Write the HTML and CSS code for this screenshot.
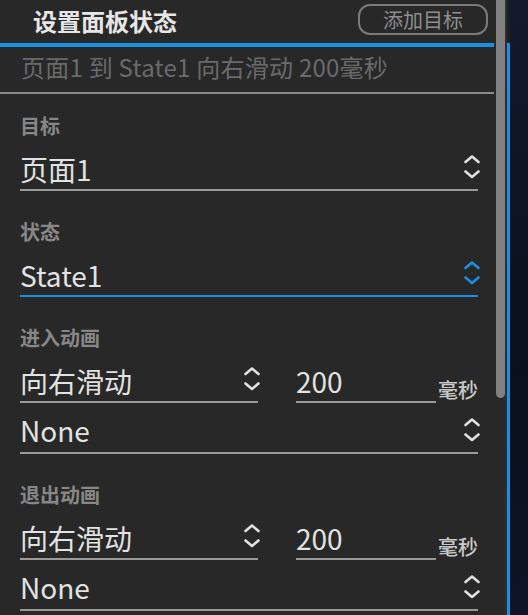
FILE: index.html
```html
<!DOCTYPE html>
<html lang="zh">
<head>
  <meta charset="UTF-8">
  <meta name="viewport" content="width=device-width, initial-scale=1.0">
  <title>设置面板状态</title>
  <link rel="stylesheet" href="styles.css">
</head>
<body>
  <div class="panel">
    <div class="header">
      <h1 class="title">设置面板状态</h1>
      <button class="add-button">添加目标</button>
    </div>
    <div class="summary">页面1 到 State1 向右滑动 200毫秒</div>

    <div class="form">
      <div class="group">
        <div class="label">目标</div>
        <div class="field">
          <span class="value">页面1</span>
          <svg class="chevrons" viewBox="0 0 16 24" width="16" height="24"><polyline points="1.5,7 8,1.5 14.5,7"/><polyline points="1.5,16.5 8,22 14.5,16.5"/></svg>
        </div>
      </div>

      <div class="group">
        <div class="label">状态</div>
        <div class="field active">
          <span class="value">State1</span>
          <svg class="chevrons" viewBox="0 0 16 24" width="16" height="24"><polyline points="1.5,7 8,1.5 14.5,7"/><polyline points="1.5,16.5 8,22 14.5,16.5"/></svg>
        </div>
      </div>

      <div class="group">
        <div class="label">进入动画</div>
        <div class="row">
          <div class="field effect">
            <span class="value">向右滑动</span>
            <svg class="chevrons" viewBox="0 0 16 24" width="16" height="24"><polyline points="1.5,7 8,1.5 14.5,7"/><polyline points="1.5,16.5 8,22 14.5,16.5"/></svg>
          </div>
          <div class="field duration">
            <span class="value">200</span>
          </div>
          <span class="unit">毫秒</span>
        </div>
        <div class="field">
          <span class="value latin">None</span>
          <svg class="chevrons" viewBox="0 0 16 24" width="16" height="24"><polyline points="1.5,7 8,1.5 14.5,7"/><polyline points="1.5,16.5 8,22 14.5,16.5"/></svg>
        </div>
      </div>

      <div class="group">
        <div class="label">退出动画</div>
        <div class="row">
          <div class="field effect">
            <span class="value">向右滑动</span>
            <svg class="chevrons" viewBox="0 0 16 24" width="16" height="24"><polyline points="1.5,7 8,1.5 14.5,7"/><polyline points="1.5,16.5 8,22 14.5,16.5"/></svg>
          </div>
          <div class="field duration">
            <span class="value">200</span>
          </div>
          <span class="unit">毫秒</span>
        </div>
        <div class="field">
          <span class="value latin">None</span>
          <svg class="chevrons" viewBox="0 0 16 24" width="16" height="24"><polyline points="1.5,7 8,1.5 14.5,7"/><polyline points="1.5,16.5 8,22 14.5,16.5"/></svg>
        </div>
      </div>
    </div>

    <div class="scrollbar"></div>
  </div>
  <div class="edge"></div>
  <div class="desk"></div>
</body>
</html>
```

FILE: styles.css
```css
html, body {
  height: 100%;
}
body {
  margin: 0;
  display: flex;
  overflow: hidden;
  font-family: "Noto Sans CJK SC", sans-serif;
  background-color: #0c1322;
}
.panel {
  position: relative;
  width: 507px;
  flex: 0 0 507px;
  height: 100%;
  background-color: #282828;
  box-shadow: inset -2px 0 0 #2e2e2e;
  overflow: hidden;
}
.edge {
  flex: 0 0 3px;
  background: linear-gradient(#1e1e1e 43px, #1b8fe2 43px);
}
.desk {
  flex: 1;
  background: linear-gradient(160deg, #121a2c, #0a0f1c 60%, #0d1526);
}
.header {
  display: flex;
  align-items: flex-start;
  justify-content: space-between;
  width: 494px;
  height: 43px;
  border-bottom: 4px solid #1b8fe2;
}
.title {
  margin: 7px 0 0 33px;
  font-size: 24px;
  line-height: 28px;
  font-weight: 700;
  color: #e6e6e6;
}
.add-button {
  margin: 4px 6px 0 0;
  width: 130px;
  height: 31px;
  padding: 0;
  border: 2px solid #7a7a7a;
  border-radius: 12px;
  background: transparent;
  font-family: inherit;
  font-size: 20px;
  line-height: 25px;
  color: #8e8e8e;
}
.summary {
  width: 473px;
  padding: 6px 0 11px 21px;
  font-size: 24px;
  line-height: 28px;
  letter-spacing: 0.25px;
  color: #6a6a6a;
  border-bottom: 2px solid #8a8a8a;
  white-space: nowrap;
}
.form {
  padding: 21px 29px 0 20px;
}
.group + .group {
  margin-top: 30px;
}
.label {
  font-size: 20px;
  line-height: 22px;
  font-weight: 700;
  color: #878787;
  margin-bottom: 3px;
}
.field {
  box-sizing: border-box;
  height: 51px;
  display: flex;
  align-items: flex-end;
  justify-content: space-between;
  padding-bottom: 6px;
  border-bottom: 2px solid #9a9a9a;
}
.value {
  font-size: 28px;
  line-height: 28px;
  color: #e2e2e2;
  white-space: nowrap;
}
.value.latin {
  margin-bottom: 2px;
}
.chevrons {
  flex: none;
  margin: 0 -2px 4px 0;
  fill: none;
  stroke: #e0e0e0;
  stroke-width: 2.6;
  stroke-linecap: round;
  stroke-linejoin: round;
}
.field.active {
  border-bottom-color: #1b8fe2;
}
.field.active .chevrons {
  stroke: #1b8fe2;
}
.row {
  display: flex;
  align-items: flex-end;
}
.effect {
  flex: 0 0 238px;
}
.duration {
  flex: 0 0 140px;
  margin-left: 38px;
}
.unit {
  flex: 1;
  text-align: right;
  font-size: 20px;
  line-height: 22px;
  font-weight: 500;
  color: #c9c9c9;
  margin-bottom: 2px;
}
.scrollbar {
  position: absolute;
  top: -10px;
  left: 496px;
  width: 9px;
  height: 408px;
  border-radius: 5px;
  background-color: rgba(158, 158, 158, 0.76);
}
```
